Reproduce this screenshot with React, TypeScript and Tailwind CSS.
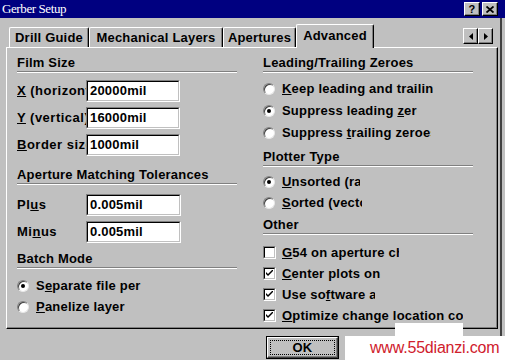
import type { ReactNode } from "react";

const Etch = ({ className }: { className: string }) => (
  <div className={`h-[2px] border-t border-b border-t-[#808080] border-b-white ${className}`} />
);

const Header = ({ title, className }: { title: string; className: string }) => (
  <div className={className}>
    <div className="h-[15px] leading-[15px] whitespace-nowrap">{title}</div>
    <Etch className="mt-[1px]" />
  </div>
);

const Field = ({ value, w }: { value: string; w: string }) => (
  <div className={`h-[22px] ${w} shrink-0 border border-[#808080] border-r-white border-b-white`}>
    <div className="h-full border border-black border-r-[#c0c0c0] border-b-[#c0c0c0] bg-white pl-[2px] leading-[18px] whitespace-nowrap overflow-hidden">
      {value}
    </div>
  </div>
);

const FieldRow = ({ label, value, w }: { label: ReactNode; value: string; w: string }) => (
  <div className="flex items-center h-[22px]">
    <div className="w-[69px] overflow-hidden whitespace-nowrap tracking-[0.5px]">{label}</div>
    <Field value={value} w={w} />
  </div>
);

const Radio = ({ on, clip, children, h }: { on?: boolean; clip: string; children: ReactNode; h: string }) => (
  <div className={`flex items-center ${h}`}>
    <div className="relative w-[12px] h-[12px] shrink-0 rounded-full bg-white border border-[#808080] border-r-[#e8e8e8] border-b-[#e8e8e8] shadow-[inset_1px_1px_0_#404040]">
      {on ? <div className="absolute left-[3px] top-[3px] w-[4px] h-[4px] rounded-full bg-black" /> : null}
    </div>
    <div className={`ml-[7px] overflow-hidden whitespace-nowrap ${clip}`}>{children}</div>
  </div>
);

const Check = ({ on, clip, children }: { on?: boolean; clip: string; children: ReactNode }) => (
  <div className="flex items-center h-[21px]">
    <div className="w-[13px] h-[13px] shrink-0 border border-[#808080] border-r-white border-b-white">
      <div className="w-full h-full border border-black border-r-[#c0c0c0] border-b-[#c0c0c0] bg-white flex items-center justify-center">
        {on ? (
          <svg width="7" height="7" viewBox="0 0 7 7">
            <path d="M0 2 L0 4 L2 6 L7 1 L7 -1 L2 4 Z" fill="black" />
          </svg>
        ) : null}
      </div>
    </div>
    <div className={`ml-[6px] overflow-hidden whitespace-nowrap ${clip}`}>{children}</div>
  </div>
);

const Tab = ({ label, w }: { label: string; w: string }) => (
  <div
    className={`${w} h-[20px] shrink-0 flex items-center justify-center rounded-t-[2px] border-t border-l border-white border-r border-r-black shadow-[inset_-1px_0_#808080] leading-[15px] whitespace-nowrap`}
  >
    {label}
  </div>
);

const RaisedBtn = ({ children, w }: { children: ReactNode; w: string }) => (
  <div className={`${w} h-[16px] flex items-center justify-center bg-[#c0c0c0] border border-white border-r-black border-b-black shadow-[inset_-1px_-1px_#808080]`}>
    {children}
  </div>
);

export default function App() {
  return (
    <div className="relative w-[505px] h-[360px] overflow-hidden bg-[#c0c0c0] font-['Liberation_Sans',Arial,sans-serif] font-bold text-[13px] tracking-[0.2px] text-black">
      {/* title bar */}
      <div className="h-[18px] bg-[#000080] flex items-center justify-between pl-[2px] pr-[7px]">
        <span className="font-['Liberation_Serif',serif] font-normal text-[13px] tracking-[-0.4px] text-white">
          Gerber Setup
        </span>
        <div className="flex gap-[2px]">
          <div className="w-[16px] h-[14px] flex items-center justify-center bg-[#c0c0c0] border border-white border-r-black border-b-black shadow-[inset_-1px_-1px_#808080] text-[11px] leading-none">
            ?
          </div>
          <div className="w-[16px] h-[14px] flex items-center justify-center bg-[#c0c0c0] border border-white border-r-black border-b-black shadow-[inset_-1px_-1px_#808080]">
            <svg width="8" height="7" viewBox="0 0 8 7">
              <path d="M0.5 0.5 L7.5 6.5 M7.5 0.5 L0.5 6.5" stroke="black" strokeWidth="1.8" />
            </svg>
          </div>
        </div>
      </div>

      <div className="flex">
        <div className="w-[502px] pl-[6px] pr-[2px] pt-[6px] border-r-2 border-r-[#404040]">
          {/* tab strip */}
          <div className="relative z-10 h-[23px] flex items-end pl-[3px]">
            <Tab label="Drill Guide" w="w-[80px]" />
            <Tab label="Mechanical Layers" w="w-[134px]" />
            <Tab label="Apertures" w="w-[73px]" />
            <div className="w-[78px] h-[24px] -mb-[1px] shrink-0 flex justify-center pt-[3px] bg-[#c0c0c0] rounded-t-[2px] border-t border-l border-white border-r border-r-black shadow-[inset_-1px_0_#808080] leading-[15px] whitespace-nowrap">
              Advanced
            </div>
            <div className="ml-auto mr-[5px] self-start mt-[4px] flex">
              <RaisedBtn w="w-[15px]">
                <svg width="4" height="7" viewBox="0 0 4 7">
                  <path d="M4 0 L0 3.5 L4 7 Z" fill="black" />
                </svg>
              </RaisedBtn>
              <RaisedBtn w="w-[15px]">
                <svg width="4" height="7" viewBox="0 0 4 7">
                  <path d="M0 0 L4 3.5 L0 7 Z" fill="black" />
                </svg>
              </RaisedBtn>
            </div>
          </div>

          {/* panel */}
          <div className="h-[282px] border-t border-l border-white border-r border-b border-r-black border-b-black shadow-[inset_-1px_-1px_#808080] flex pl-[10px] pt-[7px]">
            {/* left column */}
            <div className="w-[220px] flex flex-col">
              <Header title="Film Size" className="" />
              <div className="mt-[7px] flex flex-col gap-[5px]">
                <FieldRow label={<><u>X</u> (horizontal)</>} value="20000mil" w="w-[94px]" />
                <FieldRow label={<><u>Y</u> (vertical)</>} value="16000mil" w="w-[94px]" />
                <FieldRow label={<><u>B</u>order size</>} value="1000mil" w="w-[94px]" />
              </div>
              <Header title="Aperture Matching Tolerances" className="mt-[11px]" />
              <div className="mt-[9px] flex flex-col gap-[5px]">
                <FieldRow label={<>Pl<u>u</u>s</>} value="0.005mil" w="w-[95px]" />
                <FieldRow label={<>Mi<u>n</u>us</>} value="0.005mil" w="w-[95px]" />
              </div>
              <Header title="Batch Mode" className="mt-[8px]" />
              <div className="mt-[6px]">
                <Radio on clip="w-[107px]" h="h-[21px]">
                  S<u>e</u>parate file per layer
                </Radio>
                <Radio clip="w-[107px]" h="h-[21px]">
                  <u>P</u>anelize layer
                </Radio>
              </div>
            </div>

            {/* right column */}
            <div className="ml-[26px] w-[210px] flex flex-col">
              <Header title="Leading/Trailing Zeroes" className="" />
              <div className="mt-[5px]">
                <Radio clip="w-[151px]" h="h-[22px]">
                  <u>K</u>eep leading and trailing zeroes
                </Radio>
                <Radio on clip="w-[135px]" h="h-[22px]">
                  Suppress leading <u>z</u>eroes
                </Radio>
                <Radio clip="w-[149px]" h="h-[22px]">
                  Suppress <u>t</u>railing zeroes
                </Radio>
              </div>
              <Header title="Plotter Type" className="mt-[5px]" />
              <div className="mt-[4px]">
                <Radio on clip="w-[78px]" h="h-[21px]">
                  <u>U</u>nsorted (raster)
                </Radio>
                <Radio clip="w-[80px]" h="h-[21px]">
                  <u>S</u>orted (vector)
                </Radio>
              </div>
              <Header title="Other" className="mt-[4px]" />
              <div className="mt-[7px]">
                <Check clip="w-[117px]">
                  <u>G</u>54 on aperture change
                </Check>
                <Check on clip="w-[100px]">
                  <u>C</u>enter plots on
                </Check>
                <Check on clip="w-[93px]">
                  Use so<u>f</u>tware arcs
                </Check>
                <Check on clip="w-[181px]">
                  <u>O</u>ptimize change location commands
                </Check>
              </div>
            </div>
          </div>

          {/* buttons */}
          <div className="mt-[7px] flex justify-end gap-[6px] pr-[1px]">
            <div className="w-[73px] h-[23px] border border-black">
              <div className="w-full h-full border border-white border-r-[#404040] border-b-[#404040] shadow-[inset_-1px_-1px_#808080] p-[2px]">
                <div className="w-full h-full border border-dotted border-black flex items-center justify-center leading-none">
                  OK
                </div>
              </div>
            </div>
            <div className="w-[73px] h-[23px] border border-white border-r-black border-b-black" />
            <div className="w-[73px] h-[23px] border border-white border-r-black border-b-black" />
          </div>
        </div>
      </div>

      {/* watermark */}
      <div className="absolute left-[395px] top-[323px] w-[68px] h-[14px] bg-white" />
      <div className="absolute left-[345px] top-[336px] w-[160px] h-[24px] bg-white flex items-center pl-[25px]">
        <span className="font-['Liberation_Sans',Arial,sans-serif] font-normal text-[16px] tracking-[-0.2px] text-[#d0202c] leading-none">
          www.55dianzi.com
        </span>
      </div>
    </div>
  );
}
